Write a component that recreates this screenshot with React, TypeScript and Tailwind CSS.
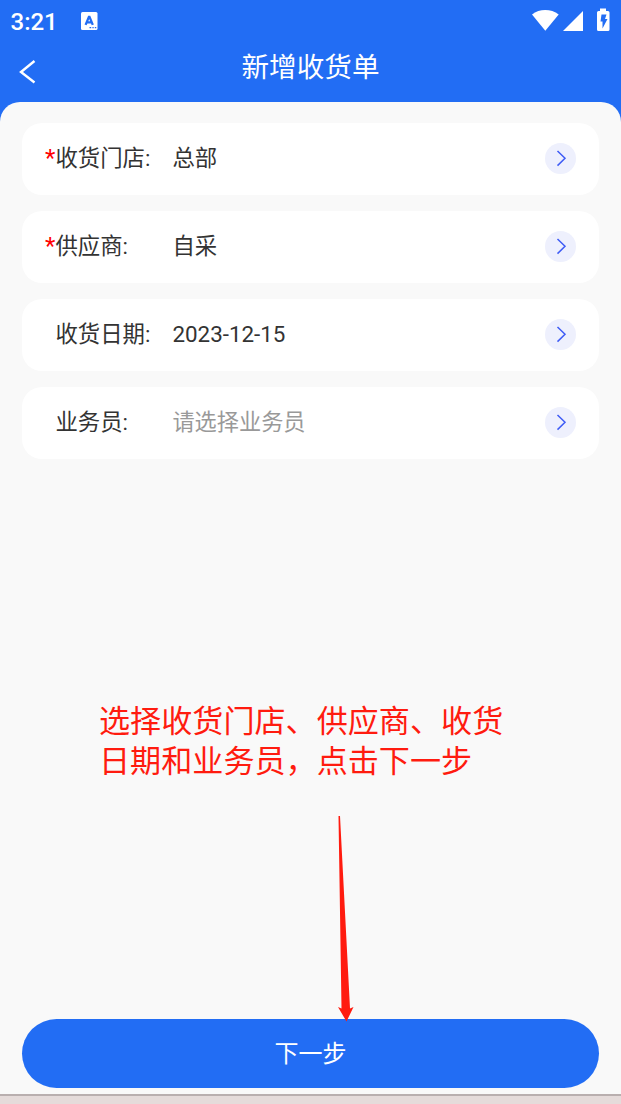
import React from "react"
import clsx from "clsx"

interface Field {
  label: string
  value: string
  required?: boolean
  placeholder?: boolean
}

const fields: Field[] = [
  { label: "收货门店:", value: "总部", required: true },
  { label: "供应商:", value: "自采", required: true },
  { label: "收货日期:", value: "2023-12-15" },
  { label: "业务员:", value: "请选择业务员", placeholder: true },
]

const StatusBar: React.FC = () => (
  <div className="flex h-10 items-center pl-[10.5px] text-white">
    <span className="mt-[3px] w-[70.5px] text-[24px] leading-6 font-medium">3:21</span>
    <svg className="mt-px" width="17" height="18" viewBox="0 0 17 18">
      <rect width="16.5" height="18" rx="1.5" fill="#fff" />
      <path d="M4.600 12.900 7.900 4.800h.6l3.300 8.100M6 10.300h4.400" fill="none" stroke="#226df4" strokeWidth="2.300" />
      <path d="M8.500 15.700h1.700m1.200 0h1.300m1.100 0h1.500" stroke="#226df4" strokeWidth="1.200" />
    </svg>
    <svg className="ml-auto" width="89" height="40" viewBox="0 0 89 40" fill="#fff">
      <path d="M0 14.400C7.500 8.500 19 8.500 26.700 14.400L13.300 30.700Z" />
      <path d="M31 31 51 11v20Z" />
      <path
        fillRule="evenodd"
        d="M68 8.500h6v2.500h2q1.500 0 1.500 1.500v17q0 1.500-1.500 1.500H66.500q-1.500 0-1.500-1.500v-17q0-1.500 1.500-1.500H68ZM69.500 14.500 68.500 21.500h2v7l5-9.500h-2.500l1.500-4.500Z"
      />
    </svg>
  </div>
)

const NavBar: React.FC = () => (
  <div className="relative flex h-[62px] justify-center pt-[8px] text-white">
    <svg className="absolute top-5 left-[19px]" width="17" height="24" viewBox="0 0 17 24" fill="none">
      <path d="M15.500 1 2 12l13.500 10.500" stroke="#fff" strokeWidth="2.400" />
    </svg>
    <h1 className="text-[27.600px] leading-10">新增收货单</h1>
  </div>
)

const FieldCard: React.FC<{ field: Field }> = ({ field }) => (
  <div className="flex h-[72.500px] items-center rounded-[20px] bg-white pr-[22.500px] pl-[22.500px] text-[22.400px] leading-8 text-[#333]">
    <span className="-mt-px w-[10.500px] text-[24px] text-[#f00]">{field.required && "*"}</span>
    <span className="-mt-px w-[117px]">{field.label}</span>
    <span className={clsx("-mt-px flex-1", field.placeholder && "text-[22.200px] text-[#999]")}>{field.value}</span>
    <svg width="31" height="31" viewBox="0 0 31 31" fill="none">
      <circle cx="15.500" cy="15.500" r="15.500" fill="#eef0fd" />
      <path d="m12.500 8 7.500 7.300-7.500 7.300" stroke="#3f5cf5" strokeWidth="1.500" />
    </svg>
  </div>
)

export default function App() {
  return (
    <div className="flex h-[1104px] w-[621px] flex-col overflow-hidden bg-[#226df4] font-[Roboto,'Noto_Sans_CJK_SC',sans-serif]">
      <StatusBar />
      <NavBar />
      <main className="relative flex flex-1 flex-col rounded-t-[20px] bg-[#f9f9f9] px-[22.400px] pt-[20.500px]">
        <div className="flex flex-col gap-[15.500px]">
          {fields.map((field) => (
            <FieldCard key={field.label} field={field} />
          ))}
        </div>
        <p className="absolute top-[600px] left-[99px] text-[31.100px] leading-10 whitespace-nowrap text-[#ff1b0f]">
          选择收货门店、供应商、收货
          <br />
          日期和业务员，点击下一步
        </p>
        <button className="mt-auto mb-[5.600px] h-[69.400px] shrink-0 rounded-full bg-[#226df4] text-[24px] text-white">
          下一步
        </button>
        <svg className="absolute top-[714px] left-[336px]" width="20" height="207" viewBox="0 0 20 207">
          <path d="M2.500 0h1.500L14 192.500l3.500-1.500L10.500 205.500 2 191l3.500 1.500Z" fill="#ff1b0f" />
        </svg>
      </main>
      <div className="h-[10px] shrink-0 border-t-2 border-[#b9afaf] bg-[#e5dbda]" />
    </div>
  )
}
